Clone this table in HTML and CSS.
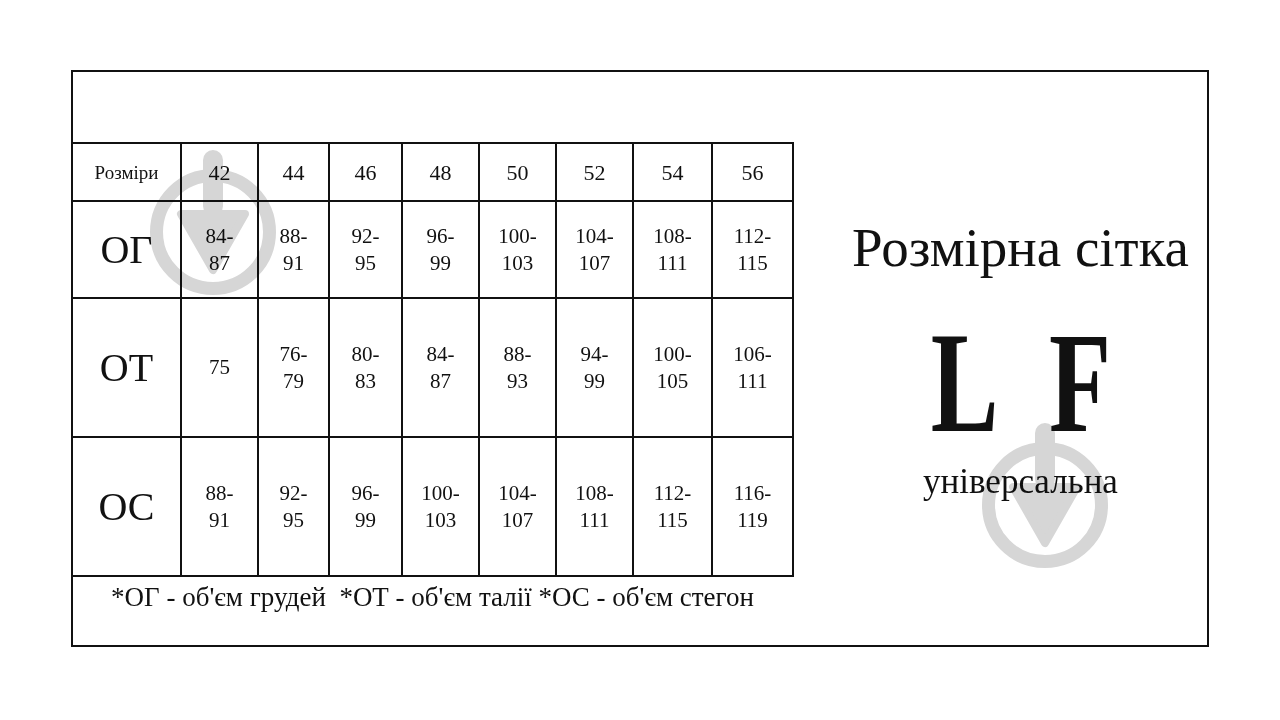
FILE: index.html
```html
<!DOCTYPE html>
<html lang="uk">
<head>
<meta charset="utf-8">
<title>Розмірна сітка</title>
<link rel="stylesheet" href="styles.css">
</head>
<body>
<div class="frame">
  <div class="left">
    <div class="grid">
      <div class="cell head label-small">Розміри</div>
      <div class="cell head">42</div>
      <div class="cell head">44</div>
      <div class="cell head">46</div>
      <div class="cell head">48</div>
      <div class="cell head">50</div>
      <div class="cell head">52</div>
      <div class="cell head">54</div>
      <div class="cell head">56</div>

      <div class="cell label">ОГ</div>
      <div class="cell">84-<br>87</div>
      <div class="cell">88-<br>91</div>
      <div class="cell">92-<br>95</div>
      <div class="cell">96-<br>99</div>
      <div class="cell">100-<br>103</div>
      <div class="cell">104-<br>107</div>
      <div class="cell">108-<br>111</div>
      <div class="cell">112-<br>115</div>

      <div class="cell label">ОТ</div>
      <div class="cell">75</div>
      <div class="cell">76-<br>79</div>
      <div class="cell">80-<br>83</div>
      <div class="cell">84-<br>87</div>
      <div class="cell">88-<br>93</div>
      <div class="cell">94-<br>99</div>
      <div class="cell">100-<br>105</div>
      <div class="cell">106-<br>111</div>

      <div class="cell label">ОС</div>
      <div class="cell">88-<br>91</div>
      <div class="cell">92-<br>95</div>
      <div class="cell">96-<br>99</div>
      <div class="cell">100-<br>103</div>
      <div class="cell">104-<br>107</div>
      <div class="cell">108-<br>111</div>
      <div class="cell">112-<br>115</div>
      <div class="cell">116-<br>119</div>
    </div>
    <p class="note">*ОГ - об'єм грудей&nbsp; *ОТ - об'єм талії *ОС - об'єм стегон</p>
  </div>
  <div class="right">
    <div class="title">Розмірна сітка</div>
    <div class="logo">L F</div>
    <div class="sub">універсальна</div>
  </div>
</div>

<svg class="mark mark-1" viewBox="0 0 140 160" width="140" height="160" aria-hidden="true">
  <circle cx="70" cy="90" r="56.5" fill="none" stroke="#d6d6d6" stroke-width="13"/>
  <rect x="60" y="8" width="20" height="66" rx="10" fill="#d6d6d6"/>
  <polygon points="38,72 102,72 70,128" fill="#d6d6d6" stroke="#d6d6d6" stroke-width="8" stroke-linejoin="round"/>
</svg>
<svg class="mark mark-2" viewBox="0 0 140 160" width="140" height="160" aria-hidden="true">
  <circle cx="70" cy="90" r="56.5" fill="none" stroke="#d6d6d6" stroke-width="13"/>
  <rect x="60" y="8" width="20" height="66" rx="10" fill="#d6d6d6"/>
  <polygon points="38,72 102,72 70,128" fill="#d6d6d6" stroke="#d6d6d6" stroke-width="8" stroke-linejoin="round"/>
</svg>
</body>
</html>
```

FILE: styles.css
```css
html, body {
  margin: 0;
  padding: 0;
  background: #ffffff;
}

body {
  width: 1280px;
  height: 720px;
  overflow: hidden;
  font-family: "Liberation Serif", "DejaVu Serif", serif;
  color: #111111;
}

.frame {
  box-sizing: border-box;
  margin: 70px 0 0 71px;
  width: 1138px;
  height: 577px;
  border: 2px solid #111111;
  display: flex;
}

.left {
  padding-top: 70px;
  margin-left: -2px;
}

.grid {
  display: grid;
  grid-template-columns: 107px 75px 69px 71px 75px 75px 75px 77px 79px;
  grid-template-rows: 56px 95px 137px 137px;
  gap: 2px;
  border: 2px solid #111111;
  background: #111111;
  width: max-content;
}

.cell {
  background: #ffffff;
  display: flex;
  align-items: center;
  justify-content: center;
  text-align: center;
  font-size: 21px;
  line-height: 27px;
}

.head {
  font-size: 22px;
}

.label-small {
  font-size: 19px;
}

.label {
  font-size: 40px;
  line-height: 1;
}

.note {
  margin: 4px 0 0 0;
  text-align: center;
  font-size: 27px;
  line-height: 32px;
  white-space: nowrap;
}

.right {
  flex: 1;
  display: flex;
  flex-direction: column;
  align-items: center;
  padding-left: 40px;
}

.title {
  margin-top: 148px;
  font-size: 55px;
  line-height: 1;
  white-space: nowrap;
}

.logo {
  margin-top: 50px;
  font-size: 145px;
  font-weight: bold;
  line-height: 115px;
  letter-spacing: 22px;
  padding-left: 22px;
  transform: scaleX(0.7);
  white-space: pre;
}

.sub {
  margin-top: 24px;
  font-size: 35px;
  line-height: 1;
}

.mark {
  position: absolute;
  mix-blend-mode: multiply;
}

.mark-1 {
  left: 143px;
  top: 142px;
}

.mark-2 {
  left: 975px;
  top: 415px;
}
```
